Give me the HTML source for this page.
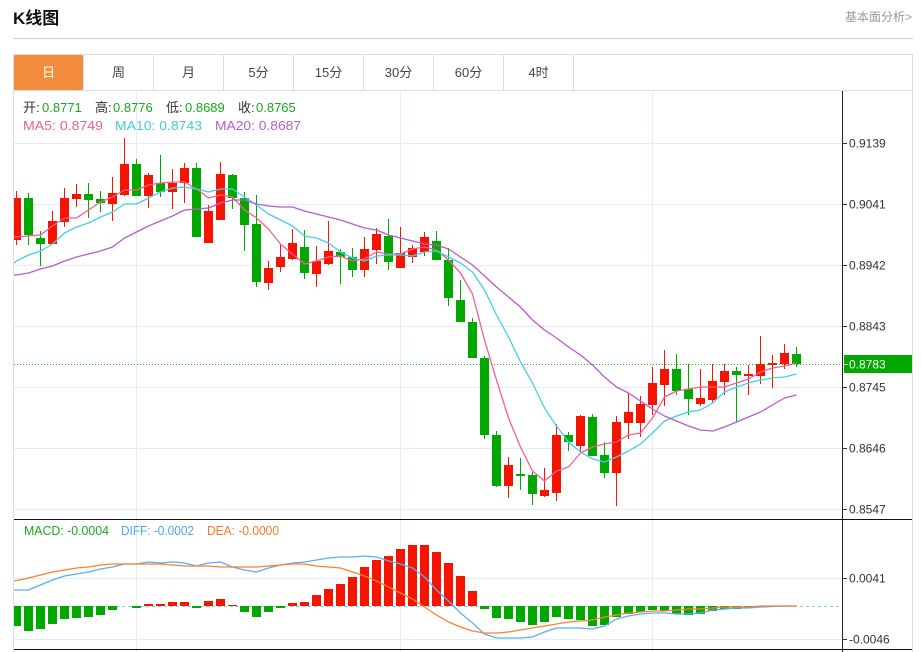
<!DOCTYPE html>
<html lang="zh">
<head>
<meta charset="utf-8">
<title>K线图</title>
<style>
html,body{margin:0;padding:0;background:#fff;width:922px;height:652px;overflow:hidden}
svg{display:block;font-family:"Liberation Sans","Noto Sans CJK SC",sans-serif}
.p{font-size:12px;fill:#333}
.v{font-size:13px}
.tab{font-size:13px;fill:#444;text-anchor:middle}
.l{fill:none;stroke-width:1.3;stroke-linejoin:round}
</style>
</head>
<body>
<svg width="922" height="652" viewBox="0 0 922 652" xmlns="http://www.w3.org/2000/svg">
<text x="13" y="24" font-size="17" font-weight="bold" fill="#111">K线图</text>
<text x="845" y="21" font-size="12" fill="#999">基本面分析&gt;</text>
<rect x="13" y="38" width="900" height="1" fill="#ccc"/>

<!-- frame -->
<path d="M13.5 652V54.5H912.5V652M14 90.5H912" fill="none" stroke="#ddd"/>
<path d="M83.5 55V90M153.5 55V90M223.5 55V90M293.5 55V90M363.5 55V90M433.5 55V90M503.5 55V90M573.5 55V90" stroke="#ddd" fill="none"/>
<rect x="14" y="55" width="69" height="35" rx="1" fill="#f38b3f"/>
<text x="48.5" y="77" class="tab" style="fill:#fff">日</text>
<text x="118.5" y="77" class="tab">周</text>
<text x="188.5" y="77" class="tab">月</text>
<text x="258.5" y="77" class="tab">5分</text>
<text x="328.5" y="77" class="tab">15分</text>
<text x="398.5" y="77" class="tab">30分</text>
<text x="468.5" y="77" class="tab">60分</text>
<text x="538.5" y="77" class="tab">4时</text>

<!-- grid -->
<path d="M14 143.5H842M14 204.5H842M14 265.5H842M14 326.5H842M14 387.5H842M14 448.5H842M14 509.5H842M14 578.5H842M14 639.5H842M136.5 91V652M400.5 91V652M652.5 91V652" stroke="#e3edf3" fill="none"/>

<!-- candles red -->
<path fill="none" stroke="#f41400" d="M16.5 191V245M52.5 211V244M64.5 188V227M76.5 184V207M112.5 177V221M124.5 138V196M148.5 173V208M172.5 169V209M184.5 163V203M208.5 205V243M220.5 162V220M268.5 261V290M280.5 245V272M292.5 229V260M316.5 246V287M328.5 221V265M364.5 237V277M376.5 228V264M400.5 227V268M412.5 245V263M424.5 232V256M508.5 457V498M544.5 468V497M556.5 424V501M580.5 415V453M616.5 416V506M628.5 393V439M640.5 396V437M652.5 367V415M664.5 350V406M700.5 369V406M712.5 364V402M724.5 364V395M748.5 365V395M760.5 336V384M772.5 355V388M784.5 344V369"/>
<path fill="#f41400" d="M14 198h7V240h-7zM48 221h9V244h-9zM60 198h9V222h-9zM72 194h9V199h-9zM108 193h9V204h-9zM120 164h9V195h-9zM144 175h9V196h-9zM168 183h9V192h-9zM180 168h9V183h-9zM204 211h9V243h-9zM216 174h9V220h-9zM264 268h9V283h-9zM276 257h9V267h-9zM288 243h9V259h-9zM312 261h9V274h-9zM324 251h9V264h-9zM360 249h9V270h-9zM372 234h9V250h-9zM396 253h9V268h-9zM408 248h9V257h-9zM420 237h9V252h-9zM504 465h9V486h-9zM540 490h9V496h-9zM552 435h9V493h-9zM576 416h9V446h-9zM612 422h9V473h-9zM624 412h9V423h-9zM636 404h9V423h-9zM648 383h9V405h-9zM660 369h9V385h-9zM696 398h9V404h-9zM708 381h9V400h-9zM720 371h9V382h-9zM744 374h9V376h-9zM756 364h9V376h-9zM768 363h9V365h-9zM780 353h9V364h-9z"/>
<!-- candles green -->
<path fill="none" stroke="#00a800" d="M28.5 193V245M40.5 231V266M88.5 183V218M100.5 191V212M136.5 159V196M160.5 155V197M196.5 163V237M232.5 174V209M244.5 192V251M256.5 195V287M304.5 230V279M340.5 249V284M352.5 248V277M388.5 219V270M436.5 231V260M448.5 248V306M460.5 280V322M472.5 318V358M484.5 356V439M496.5 431V487M520.5 458V490M532.5 472V505M568.5 432V451M592.5 414V456M604.5 442V478M676.5 354V395M688.5 364V415M736.5 367V422M796.5 347V367"/>
<path fill="#00a800" d="M24 198h9V235h-9zM36 238h9V244h-9zM84 194h9V200h-9zM96 199h9V203h-9zM132 164h9V196h-9zM156 183h9V192h-9zM192 168h9V237h-9zM228 175h9V198h-9zM240 198h9V225h-9zM252 224h9V282h-9zM300 247h9V273h-9zM336 252h9V257h-9zM348 257h9V270h-9zM384 236h9V262h-9zM432 241h9V260h-9zM444 260h9V298h-9zM456 300h9V322h-9zM468 322h9V358h-9zM480 358h9V435h-9zM492 435h9V486h-9zM516 474h9V476h-9zM528 475h9V494h-9zM564 435h9V442h-9zM588 417h9V456h-9zM600 455h9V473h-9zM672 369h9V391h-9zM684 389h9V399h-9zM732 371h9V375h-9zM792 354h9V364h-9z"/>

<!-- current price line -->
<path d="M14 364.5H842" stroke="#19b619" stroke-dasharray="1 2" fill="none"/>

<!-- MAs -->
<polyline class="l" stroke="#f2608f" points="14,237 16.5,237 28.5,236 40.5,235 52.5,226 64.5,218 76.5,218 88.5,210 100.5,202 112.5,197 124.5,190 136.5,190 148.5,185 160.5,183 172.5,182 184.5,182 196.5,189 208.5,198 220.5,195 232.5,197 244.5,210 256.5,218 268.5,229 280.5,244 292.5,254 304.5,264 316.5,261 328.5,257 340.5,256 352.5,261 364.5,259 376.5,252 388.5,254 400.5,254 412.5,249 424.5,247 436.5,250 448.5,260 460.5,273 472.5,294 484.5,340 496.5,380 508.5,418 520.5,447 532.5,471 544.5,481 556.5,471 568.5,467 580.5,453 592.5,447 604.5,444 616.5,442 628.5,435 640.5,433 652.5,418 664.5,397 676.5,391 688.5,389 700.5,387 712.5,387 724.5,387 736.5,383 748.5,379 760.5,372 772.5,368 784.5,366 796.5,363"/>
<polyline class="l" stroke="#44cfe8" points="14,263 16.5,261 28.5,255 40.5,251 52.5,244 64.5,233 76.5,227 88.5,223 100.5,217 112.5,212 124.5,204 136.5,204 148.5,198 160.5,192 172.5,188 184.5,187 196.5,189 208.5,192 220.5,189 232.5,189 244.5,197 256.5,205 268.5,214 280.5,220 292.5,226 304.5,236 316.5,238 328.5,243 340.5,252 352.5,258 364.5,261 376.5,256 388.5,255 400.5,255 412.5,256 424.5,252 436.5,251 448.5,257 460.5,263 472.5,272 484.5,290 496.5,315 508.5,337 520.5,362 532.5,383 544.5,408 556.5,426 568.5,442 580.5,452 592.5,459 604.5,462 616.5,457 628.5,451 640.5,444 652.5,433 664.5,421 676.5,416 688.5,412 700.5,410 712.5,403 724.5,392 736.5,387 748.5,383 760.5,380 772.5,378 784.5,377 796.5,374"/>
<polyline class="l" stroke="#b85ccb" points="14,275 16.5,275 28.5,273 40.5,269 52.5,266 64.5,261 76.5,257 88.5,254 100.5,251 112.5,247 124.5,238 136.5,232 148.5,226 160.5,221 172.5,216 184.5,210 196.5,209 208.5,208 220.5,203 232.5,200 244.5,200 256.5,204 268.5,206 280.5,207 292.5,207 304.5,211 316.5,214 328.5,217 340.5,220 352.5,224 364.5,228 376.5,230 388.5,235 400.5,238 412.5,241 424.5,244 436.5,245 448.5,249 460.5,257 472.5,265 484.5,276 496.5,287 508.5,297 520.5,307 532.5,320 544.5,330 556.5,338 568.5,347 580.5,355 592.5,365 604.5,377 616.5,387 628.5,393 640.5,401 652.5,409 664.5,416 676.5,421 688.5,426 700.5,430 712.5,431 724.5,427 736.5,422 748.5,417 760.5,412 772.5,405 784.5,398 796.5,395"/>

<!-- MACD -->
<path d="M14 606.5H842" stroke="#7fd3ec" stroke-dasharray="3 3" fill="none"/>
<path fill="#f41400" d="M144 604h9v2h-9zM156 604h9v2h-9zM168 602h9v4h-9zM180 602h9v4h-9zM204 601h9v5h-9zM216 599h9v7h-9zM228 605h9v1h-9zM288 603h9v3h-9zM300 602h9v4h-9zM312 595h9v11h-9zM324 589h9v17h-9zM336 584h9v22h-9zM348 577h9v29h-9zM360 567h9v39h-9zM372 560h9v46h-9zM384 556h9v50h-9zM396 549h9v57h-9zM408 545h9v61h-9zM420 545h9v61h-9zM432 552h9v54h-9zM444 563h9v43h-9zM456 576h9v30h-9zM468 591h9v15h-9z"/>
<path fill="#00a800" d="M14 606h7v20h-7zM24 606h9v25h-9zM36 606h9v23h-9zM48 606h9v18h-9zM60 606h9v13h-9zM72 606h9v12h-9zM84 606h9v11h-9zM96 606h9v9h-9zM108 606h9v4h-9zM132 606h9v2h-9zM192 606h9v2h-9zM240 606h9v6h-9zM252 606h9v11h-9zM264 606h9v6h-9zM276 606h9v2h-9zM480 606h9v3h-9zM492 606h9v12h-9zM504 606h9v13h-9zM516 606h9v16h-9zM528 606h9v19h-9zM540 606h9v16h-9zM552 606h9v11h-9zM564 606h9v13h-9zM576 606h9v14h-9zM588 606h9v20h-9zM600 606h9v19h-9zM612 606h9v11h-9zM624 606h9v8h-9zM636 606h9v6h-9zM648 606h9v4h-9zM660 606h9v5h-9zM672 606h9v8h-9zM684 606h9v9h-9zM696 606h9v8h-9zM708 606h9v5h-9zM720 606h9v3h-9zM732 606h9v3h-9zM744 606h9v2h-9z"/>
<polyline class="l" stroke="#5aaef5" points="14,590 28.5,590 40.5,585 52.5,580 64.5,576 76.5,574 88.5,572 100.5,569 112.5,567 124.5,564 136.5,564 148.5,562 160.5,563 172.5,562 184.5,563 196.5,566 208.5,563 220.5,562 232.5,567 244.5,570 256.5,572 268.5,568 280.5,565 292.5,563 304.5,562 316.5,560 328.5,558 340.5,557 352.5,557 364.5,556 376.5,557 388.5,561 400.5,564 412.5,568 424.5,577 436.5,590 448.5,601 460.5,613 472.5,623 484.5,634 496.5,638 508.5,638 520.5,638 532.5,637 544.5,632 556.5,628 568.5,628 580.5,628 592.5,629 604.5,626 616.5,619 628.5,616 640.5,614 652.5,613 664.5,613 676.5,614 688.5,614 700.5,613 712.5,610 724.5,609 736.5,608 748.5,608 760.5,607 772.5,606.5 784.5,606 796.5,606"/>
<polyline class="l" stroke="#ff7f2a" points="14,581 28.5,578 40.5,575 52.5,572 64.5,570 76.5,568 88.5,567 100.5,565 112.5,564 124.5,564 136.5,564 148.5,564 160.5,564 172.5,565 184.5,566 196.5,566 208.5,566 220.5,567 232.5,567 244.5,567 256.5,567 268.5,566 280.5,565 292.5,564 304.5,564 316.5,566 328.5,567 340.5,568 352.5,572 364.5,576 376.5,581 388.5,587 400.5,593 412.5,599 424.5,607 436.5,615 448.5,622 460.5,627 472.5,631 484.5,633 496.5,633 508.5,632 520.5,630 532.5,628 544.5,626 556.5,624 568.5,622 580.5,621 592.5,620 604.5,617 616.5,615 628.5,613 640.5,612 652.5,611 664.5,611 676.5,610 688.5,609 700.5,609 712.5,608 724.5,607 736.5,607 748.5,607 760.5,606 772.5,606 784.5,606 796.5,606"/>

<!-- black frame lines -->
<path d="M14 519.5H912M14 649.5H912" stroke="#111" fill="none"/>
<path d="M842.5 91V652" stroke="#222" fill="none"/>
<path d="M843 143.5h4M843 204.5h4M843 265.5h4M843 326.5h4M843 387.5h4M843 448.5h4M843 509.5h4M843 578.5h4M843 639.5h4" stroke="#333" fill="none"/>

<!-- price tag -->
<rect x="844" y="355" width="68" height="18" fill="#00a800"/>
<path d="M844 364.5h4" stroke="#fff"/>
<text x="849" y="368.5" class="p" style="fill:#fff">0.8783</text>
<text x="849" y="147.5" class="p">0.9139</text>
<text x="849" y="208.5" class="p">0.9041</text>
<text x="849" y="269.5" class="p">0.8942</text>
<text x="849" y="330.5" class="p">0.8843</text>
<text x="849" y="391.5" class="p">0.8745</text>
<text x="849" y="452.5" class="p">0.8646</text>
<text x="849" y="513.5" class="p">0.8547</text>
<text x="849" y="582.5" class="p">0.0041</text>
<text x="849" y="643.5" class="p">-0.0046</text>

<!-- legends -->
<text x="23" y="112" class="v" fill="#333">开:</text><text x="42" y="112" class="v" fill="#19a919">0.8771</text>
<text x="95" y="112" class="v" fill="#333">高:</text><text x="113" y="112" class="v" fill="#19a919">0.8776</text>
<text x="166" y="112" class="v" fill="#333">低:</text><text x="185" y="112" class="v" fill="#19a919">0.8689</text>
<text x="238" y="112" class="v" fill="#333">收:</text><text x="256" y="112" class="v" fill="#19a919">0.8765</text>
<text x="23" y="130" class="v" fill="#f2608f" textLength="80" lengthAdjust="spacingAndGlyphs">MA5: 0.8749</text>
<text x="115" y="130" class="v" fill="#44c8e4" textLength="87" lengthAdjust="spacingAndGlyphs">MA10: 0.8743</text>
<text x="215" y="130" class="v" fill="#b85ccb" textLength="86" lengthAdjust="spacingAndGlyphs">MA20: 0.8687</text>
<text x="24" y="535" class="v" fill="#19a919" textLength="85" lengthAdjust="spacingAndGlyphs">MACD: -0.0004</text>
<text x="121" y="535" class="v" fill="#4da6f0" textLength="73" lengthAdjust="spacingAndGlyphs">DIFF: -0.0002</text>
<text x="207" y="535" class="v" fill="#ff7a1f" textLength="72" lengthAdjust="spacingAndGlyphs">DEA: -0.0000</text>
</svg>
</body>
</html>
